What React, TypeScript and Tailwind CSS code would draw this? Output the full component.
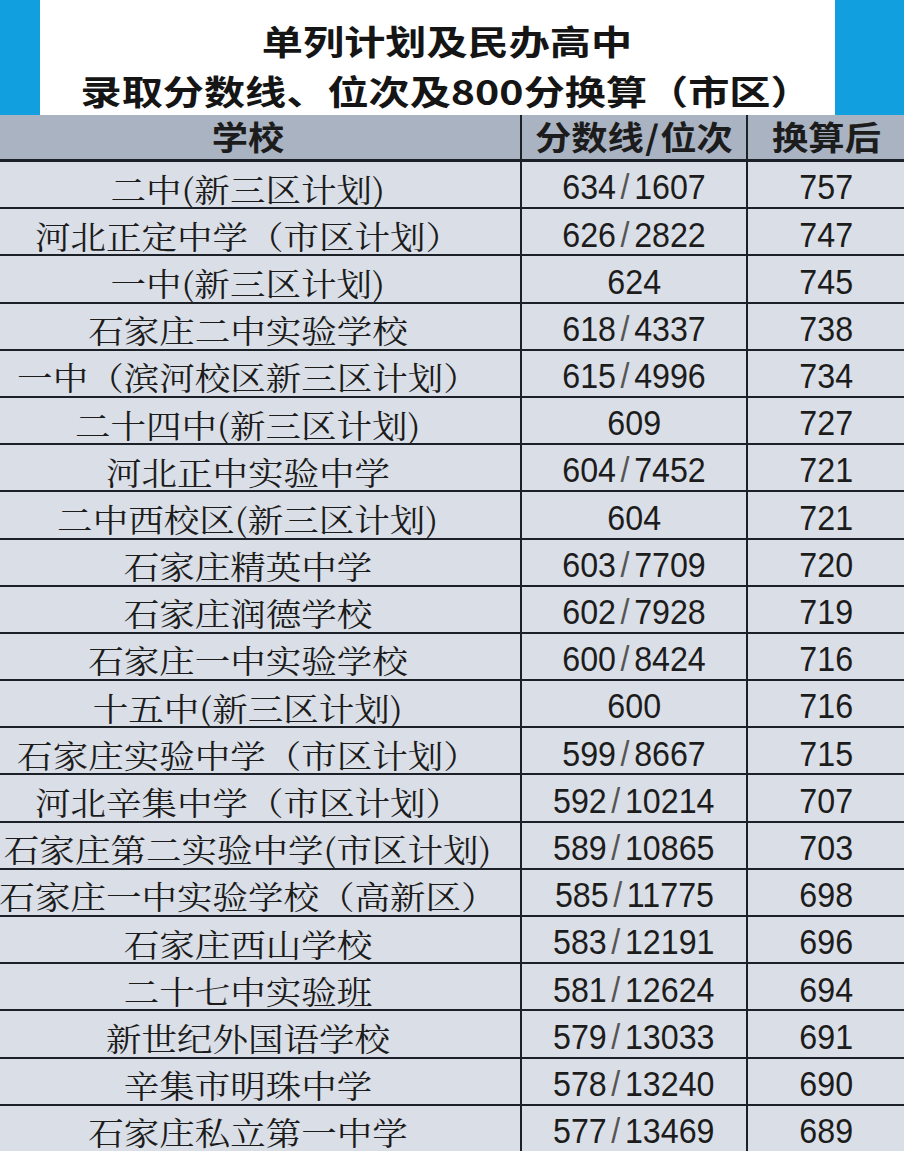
const rows: [string, string, string][] = [
  ["二中(新三区计划)", "634/1607", "757"],
  ["河北正定中学（市区计划）", "626/2822", "747"],
  ["一中(新三区计划)", "624", "745"],
  ["石家庄二中实验学校", "618/4337", "738"],
  ["一中（滨河校区新三区计划）", "615/4996", "734"],
  ["二十四中(新三区计划)", "609", "727"],
  ["河北正中实验中学", "604/7452", "721"],
  ["二中西校区(新三区计划)", "604", "721"],
  ["石家庄精英中学", "603/7709", "720"],
  ["石家庄润德学校", "602/7928", "719"],
  ["石家庄一中实验学校", "600/8424", "716"],
  ["十五中(新三区计划)", "600", "716"],
  ["石家庄实验中学（市区计划）", "599/8667", "715"],
  ["河北辛集中学（市区计划）", "592/10214", "707"],
  ["石家庄第二实验中学(市区计划)", "589/10865", "703"],
  ["石家庄一中实验学校（高新区）", "585/11775", "698"],
  ["石家庄西山学校", "583/12191", "696"],
  ["二十七中实验班", "581/12624", "694"],
  ["新世纪外国语学校", "579/13033", "691"],
  ["辛集市明珠中学", "578/13240", "690"],
  ["石家庄私立第一中学", "577/13469", "689"],
];

const cjkSerif = "font-['Noto_Serif_CJK_SC','Noto_Sans_CJK_SC',serif]";
const numFont = "font-['Liberation_Sans',sans-serif] text-[35px]";

function Score({ value }: { value: string }) {
  const [a, b] = value.split("/");
  return (
    <span className="inline-block scale-x-[0.92] whitespace-nowrap">
      {a}
      {b && <span className="px-[5px] font-light text-[#555]">/</span>}
      {b}
    </span>
  );
}

export default function App() {
  return (
    <div className="h-[1151px] w-[904px] overflow-hidden bg-[#dadee6] text-[#1c1c1c]">
      <div className="flex h-[115px] bg-[#129fe0]">
        <div className="ml-[40px] flex w-[795px] flex-col items-center justify-center bg-white pl-[18px] pt-[16px] font-['Noto_Sans_CJK_SC',sans-serif] text-[34px] font-bold leading-[50px] text-[#151515]">
          <span className="inline-block scale-x-[1.21] whitespace-nowrap">单列计划及民办高中</span>
          <span className="inline-block scale-x-[1.21] whitespace-nowrap">
            录取分数线、位次及800分换算（市区）
          </span>
        </div>
      </div>

      <div className="flex h-[47px] border-b-[3px] border-[#1b2126] bg-[#aab3c1] font-['Noto_Sans_CJK_SC',sans-serif] text-[33px] font-bold">
        <div className="flex w-[522px] items-center justify-center border-r-2 border-[#1b2126] pr-[24px]">
          <span className="inline-block scale-x-[1.1]">学校</span>
        </div>
        <div className="flex w-[226px] items-center justify-center border-r-2 border-[#1b2126]">
          <span className="inline-block scale-x-[1.1] whitespace-nowrap">
            分数线<span className="px-[1px]">/</span>位次
          </span>
        </div>
        <div className="flex flex-1 items-center justify-center">
          <span className="inline-block scale-x-[1.1]">换算后</span>
        </div>
      </div>

      {rows.map(([name, score, conv]) => (
        <div key={name} className="flex h-[47.2px] border-b-2 border-[#1b2126]">
          <div
            className={`flex w-[522px] items-center justify-center whitespace-nowrap border-r-2 border-[#1b2126] pr-[24px] pt-[6px] text-[32px] ${cjkSerif}`}
          >
            <span className="inline-block scale-x-[1.11]">{name}</span>
          </div>
          <div
            className={`flex w-[226px] items-center justify-center border-r-2 border-[#1b2126] pt-[6px] ${numFont}`}
          >
            <Score value={score} />
          </div>
          <div className={`flex flex-1 items-center justify-center pt-[6px] ${numFont}`}>
            <Score value={conv} />
          </div>
        </div>
      ))}
    </div>
  );
}
